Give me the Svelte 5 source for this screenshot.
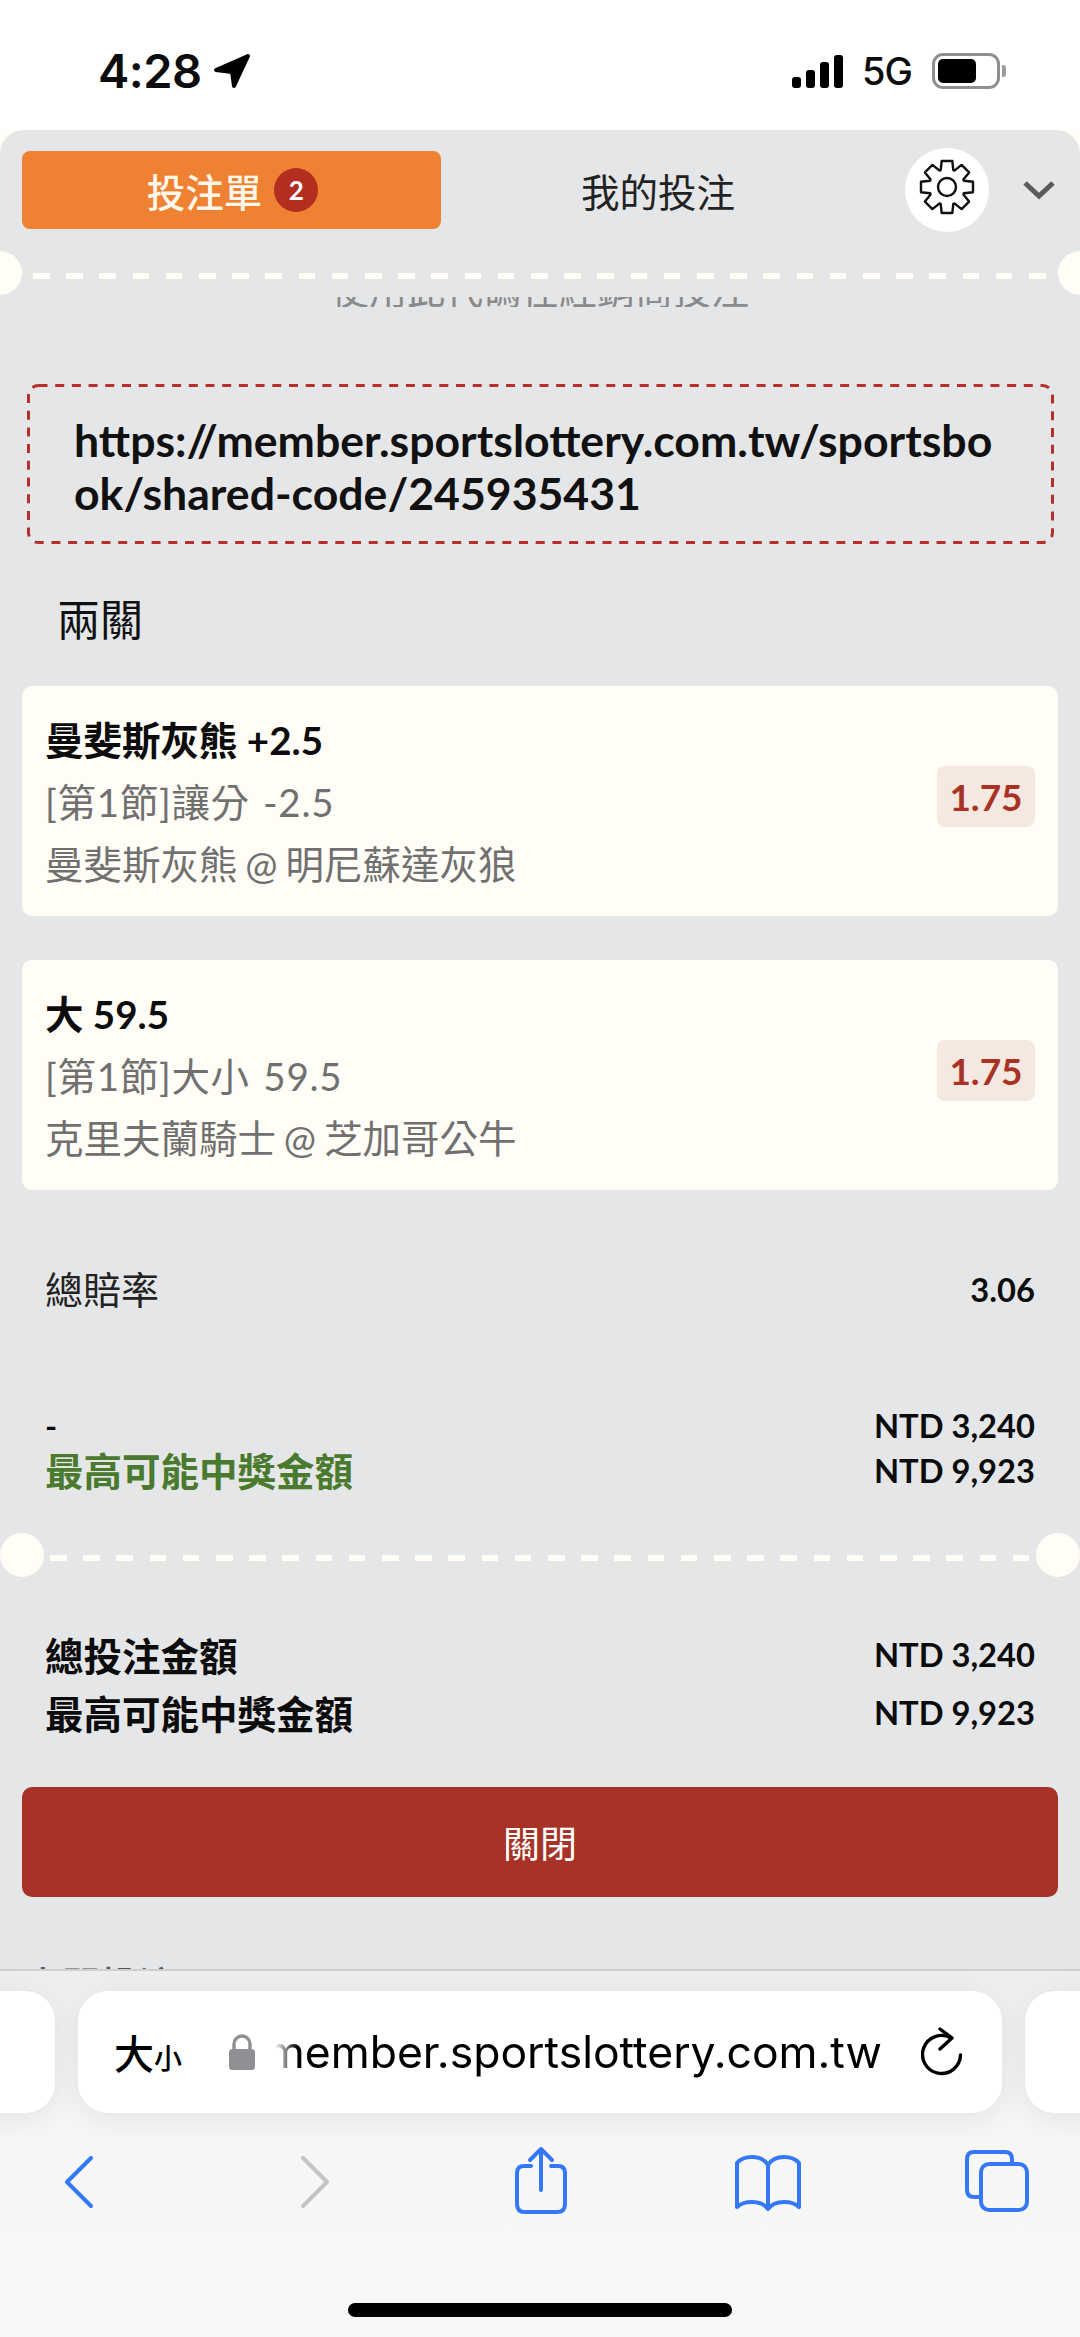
<script lang="ts">
  const bets = [
    { pick: '曼斐斯灰熊 +2.5', market: '[第1節]讓分 -2.5', game: '曼斐斯灰熊 @ 明尼蘇達灰狼', odds: '1.75' },
    { pick: '大 59.5', market: '[第1節]大小 59.5', game: '克里夫蘭騎士 @ 芝加哥公牛', odds: '1.75' }
  ];

  // 8-tooth gear outline, in a 56x56 box
  function gearPath(): string {
    const pts: string[] = [];
    const c = 28;
    for (let i = 0; i < 8; i++) {
      const a = (i * Math.PI) / 4 - Math.PI / 2;
      const step = [
        [-0.36, 18],
        [-0.2, 26.5],
        [0.2, 26.5],
        [0.36, 18]
      ];
      for (const [da, r] of step) {
        pts.push(`${(c + r * Math.cos(a + da)).toFixed(1)} ${(c + r * Math.sin(a + da)).toFixed(1)}`);
      }
    }
    return 'M' + pts.join('L') + 'Z';
  }
</script>

<div class="phone">
  <div class="status">
    <div class="status-left">
      <span class="time">4:28</span>
      <svg width="38" height="36" viewBox="0 0 38 36"><path d="M35 3 L3 17 L19 19 L21 33 Z" fill="#000" stroke="#000" stroke-width="4" stroke-linejoin="round" /></svg>
    </div>
    <div class="status-right">
      <div class="signal">
        <i style="height:11px"></i><i style="height:18px"></i><i style="height:26px"></i><i style="height:33px"></i>
      </div>
      <span class="net">5G</span>
      <div class="battery"><div class="battery-fill"></div></div>
      <div class="battery-nub"></div>
    </div>
  </div>

  <div class="sheet-wrap">
    <div class="sheet">
      <div class="head">
        <div class="tab active">投注單 <span class="count">2</span></div>
        <div class="tab">我的投注</div>
        <div class="gear">
          <svg width="58" height="58" viewBox="-1 -1 58 58" fill="none" stroke="#111" stroke-width="2.4" stroke-linejoin="round">
            <path d={gearPath()} />
            <circle cx="28" cy="28" r="9" />
          </svg>
        </div>
        <svg class="chev" width="34" height="20" viewBox="0 0 34 20"><path d="M3 3 L17 16 L31 3" fill="none" stroke="#5c5c5c" stroke-width="5" /></svg>
      </div>

      <div class="divider top"><span class="dot l"></span><span class="dot r"></span></div>
      <div class="clipped"><div>使用此代碼在經銷商投注</div></div>

      <div class="code">
        <svg class="code-border" width="1027" height="160"><rect x="1.5" y="1.5" width="1024" height="157" rx="10" fill="none" stroke="#b5302a" stroke-width="3" stroke-dasharray="9 7.7" /></svg>
        https://member.sportslottery.com.tw/sportsbook/shared-code/245935431
      </div>

      <div class="parlay">兩關</div>

      {#each bets as b}
        <div class="card">
          <div class="info">
            <div class="pick">{b.pick}</div>
            <div class="sub market">{b.market}</div>
            <div class="sub game">{b.game}</div>
          </div>
          <div class="odds">{b.odds}</div>
        </div>
      {/each}

      <div class="total-odds"><span>總賠率</span><b>3.06</b></div>

      <div class="line first"><b>-</b><b>NTD 3,240</b></div>
      <div class="line"><b class="green">最高可能中獎金額</b><b>NTD 9,923</b></div>

      <div class="divider bottom"><span class="dot l"></span><span class="dot r"></span></div>

      <div class="sum first"><b>總投注金額</b><b class="amt">NTD 3,240</b></div>
      <div class="sum"><b>最高可能中獎金額</b><b class="amt">NTD 9,923</b></div>

      <button class="close">關閉</button>
      <div class="peek">串關投注</div>
    </div>
  </div>

  <div class="toolbar">
    <div class="pills">
      <div class="pill side left"></div>
      <div class="pill main">
        <span class="aa">大<small>小</small></span>
        <svg class="lock" width="26" height="36" viewBox="0 0 26 36"><path d="M5 18 V10 a8 8 0 0 1 16 0 V18" fill="none" stroke="#8e8e93" stroke-width="3.4" /><rect x="0" y="15" width="26" height="21" rx="3.5" fill="#8e8e93" /></svg>
        <span class="addr"><span>member.sportslottery.com.tw</span></span>
        <svg class="reload" width="42" height="50" viewBox="0 0 42 50" fill="none" stroke="#000" stroke-width="3.4" stroke-linecap="round" stroke-linejoin="round"><path d="M30 11 A19 19 0 1 0 39.5 28" /><path d="M19 2 L31 11 L19 22" /></svg>
      </div>
      <div class="pill side right"></div>
    </div>
    <div class="icons">
      <svg width="30" height="52" viewBox="0 0 30 52" fill="none" stroke="#3478f6" stroke-width="4" stroke-linecap="round" stroke-linejoin="round"><path d="M27 2 L3 26 L27 50" /></svg>
      <svg width="30" height="52" viewBox="0 0 30 52" fill="none" stroke="#c4c4c6" stroke-width="4" stroke-linecap="round" stroke-linejoin="round"><path d="M3 2 L27 26 L3 50" /></svg>
      <svg width="52" height="68" viewBox="0 0 52 68" fill="none" stroke="#3478f6" stroke-width="4" stroke-linecap="round" stroke-linejoin="round"><path d="M16 20 H9 Q2 20 2 27 V58 Q2 66 10 66 H42 Q50 66 50 58 V27 Q50 20 43 20 H36" /><path d="M26 44 V3 M15 14 L26 3 L37 14" /></svg>
      <svg width="66" height="58" viewBox="0 0 66 58" fill="none" stroke="#3478f6" stroke-width="4" stroke-linecap="round" stroke-linejoin="round"><path d="M33 11 Q28 3 17 3 Q7 3 2 9 V53 Q7 48 17 48 Q28 48 33 55 Q38 48 49 48 Q59 48 64 53 V9 Q59 3 49 3 Q38 3 33 11 V55" /></svg>
      <svg width="64" height="62" viewBox="0 0 64 62" fill="none" stroke="#3478f6" stroke-width="4" stroke-linejoin="round"><path d="M47 14 V9 Q47 2 40 2 H9 Q2 2 2 9 V40 Q2 47 9 47 H16" /><rect x="16" y="14" width="46" height="46" rx="8" /></svg>
    </div>
    <div class="home"></div>
  </div>
</div>

<style>
  :global(body) {
    margin: 0;
    background: #fff;
  }

  .phone {
    width: 1080px;
    height: 2337px;
    display: flex;
    flex-direction: column;
    overflow: hidden;
    font-family: Lato, 'Noto Sans CJK TC', sans-serif;
    color: #0c0c0c;
  }

  .status {
    height: 130px;
    flex: none;
    display: flex;
    justify-content: space-between;
    align-items: flex-start;
    padding: 53px 74px 0 98px;
    box-sizing: border-box;
    background: #fff;
    font-family: Inter, sans-serif;
  }

  .status-left {
    display: flex;
    align-items: center;
    gap: 11px;
  }

  .time {
    font-size: 47px;
    line-height: 36px;
    font-weight: 600;
    letter-spacing: -0.5px;
  }

  .status-right {
    display: flex;
    align-items: center;
    height: 36px;
  }

  .signal {
    display: flex;
    align-items: flex-end;
    gap: 5px;
    margin-right: 19px;
  }

  .signal i {
    display: block;
    width: 9px;
    border-radius: 3px;
    background: #000;
  }

  .net {
    font-size: 38px;
    line-height: 36px;
    font-weight: 500;
    margin-right: 20px;
    letter-spacing: -1px;
  }

  .battery {
    width: 68px;
    height: 36px;
    box-sizing: border-box;
    border: 3px solid #8f8f8f;
    border-radius: 11px;
    padding: 3px;
  }

  .battery-fill {
    width: 38px;
    height: 100%;
    background: #000;
    border-radius: 5px;
  }

  .battery-nub {
    width: 4px;
    height: 12px;
    margin-left: 2px;
    background: #9a9a9a;
    border-radius: 0 3px 3px 0;
  }

  .sheet-wrap {
    height: 1839px;
    flex: none;
    background: #fffdf5;
  }

  .sheet {
    height: 100%;
    overflow: hidden;
    background: #e5e6e8;
    border-radius: 24px 24px 0 0;
    position: relative;
  }

  .head {
    display: flex;
    align-items: center;
    height: 78px;
    margin: 21px 0 0 22px;
  }

  .tab {
    width: 434px;
    height: 78px;
    display: flex;
    align-items: center;
    justify-content: center;
    font-size: 38.5px;
    color: #222;
  }

  .tab.active {
    width: 419px;
    box-sizing: border-box;
    padding-left: 2px;
    background: #ef8132;
    border-radius: 8px;
    color: #fff8ea;
    font-weight: 500;
    gap: 12px;
  }

  .count {
    width: 44px;
    height: 44px;
    border-radius: 50%;
    background: #b32d21;
    color: #fff;
    font-size: 26px;
    font-weight: 700;
    display: flex;
    align-items: center;
    justify-content: center;
  }

  .gear {
    width: 84px;
    height: 84px;
    flex: none;
    margin: 0 0 0 30px;
    border-radius: 50%;
    background: #fff;
    display: flex;
    align-items: center;
    justify-content: center;
  }

  .gear svg {
    margin-top: -6px;
  }

  .chev {
    margin-left: 33px;
  }

  .divider {
    position: relative;
    height: 5px;
    background: repeating-linear-gradient(90deg, #fffdf5 0 16.6px, transparent 16.6px 33.2px);
  }

  .divider.top {
    margin: 44px 33px 0;
    height: 6px;
  }

  .divider.bottom {
    margin: 62px 49px 0 50px;
    height: 6px;
  }

  .dot {
    position: absolute;
    top: -22px;
    width: 44px;
    height: 44px;
    border-radius: 50%;
    background: #fffdf5;
  }

  .top .dot.l {
    left: -55px;
  }

  .top .dot.r {
    right: -55px;
  }

  .bottom .dot.l {
    left: -50px;
  }

  .bottom .dot.r {
    right: -49px;
  }

  .clipped {
    height: 10px;
    margin-top: 18px;
    overflow: hidden;
    text-align: center;
    font-size: 38px;
    line-height: 38px;
    color: #8a8a8a;
  }

  .clipped div {
    margin-top: -27px;
  }

  .code {
    position: relative;
    margin: 77px 26px 0 27px;
    height: 160px;
    box-sizing: border-box;
    padding: 29px 50px 0 47px;
    font-size: 44.6px;
    line-height: 53px;
    font-weight: 700;
    word-break: break-all;
    color: #111;
  }

  .code-border {
    position: absolute;
    left: 0;
    top: 0;
  }

  .parlay {
    margin: 46px 0 36px 57px;
    font-size: 43px;
    line-height: 60px;
    color: #111;
  }

  .card {
    margin: 0 22px 44px;
    height: 230px;
    box-sizing: border-box;
    padding: 23px 23px 0;
    background: #fffdf6;
    border-radius: 10px;
    display: flex;
    justify-content: space-between;
  }

  .pick {
    font-size: 38.5px;
    line-height: 62px;
    font-weight: 700;
    color: #0c0c0c;
  }

  .sub {
    font-size: 38.5px;
    line-height: 62px;
    color: #707070;
  }

  .market {
    letter-spacing: 0.7px;
    word-spacing: 3px;
  }

  .game {
    word-spacing: -2px;
  }

  .odds {
    align-self: center;
    margin: -32px 0 0;
    width: 98px;
    height: 61px;
    background: #f5e8e1;
    border-radius: 8px;
    display: flex;
    align-items: center;
    justify-content: center;
    color: #a83325;
    font-size: 37px;
    font-weight: 700;
  }

  .total-odds {
    margin: 74px 45px 0;
    height: 50px;
    display: flex;
    align-items: center;
    justify-content: space-between;
    font-size: 38px;
    color: #222;
  }

  .total-odds span {
    margin-top: -4px;
  }

  .total-odds b {
    font-size: 32.7px;
    color: #0c0c0c;
  }

  .line {
    margin: 0 45px;
    height: 45px;
    display: flex;
    align-items: center;
    justify-content: space-between;
    font-size: 32.7px;
  }

  .line.first {
    margin-top: 89px;
  }

  .green {
    color: #4a7a2e;
    font-size: 38.5px;
    margin-top: -3px;
  }

  .sum {
    margin: 0 45px;
    height: 58px;
    display: flex;
    align-items: center;
    justify-content: space-between;
    font-size: 38.5px;
  }

  .sum.first {
    margin-top: 64px;
  }

  .amt {
    font-size: 32.7px;
  }

  .close {
    display: block;
    width: 1036px;
    height: 110px;
    margin: 46px 22px 0;
    border: none;
    border-radius: 10px;
    background: #a63325;
    color: #fff;
    font-family: inherit;
    font-size: 37px;
  }

  .peek {
    margin: 68px 0 0 24px;
    font-size: 38px;
    line-height: 38px;
    font-weight: 500;
    color: #555;
  }

  .toolbar {
    flex: 1;
    position: relative;
    border-top: 2px solid #cfcfd1;
    box-sizing: border-box;
    background: linear-gradient(#eeeeef, #f6f6f6 40%, #f8f8f7);
  }

  .pills {
    display: flex;
    gap: 23px;
    margin: 20px 0 0 -200px;
    width: 1500px;
  }

  .pill {
    height: 122px;
    background: #fff;
    border-radius: 30px;
    flex: none;
    box-shadow: 0 6px 30px rgba(0, 0, 0, 0.08);
  }

  .pill.side {
    width: 255px;
  }

  .pill.main {
    width: 924px;
    box-sizing: border-box;
    padding: 0 40px 0 36px;
    display: flex;
    align-items: center;
  }

  .aa {
    font-size: 40px;
    font-family: 'Noto Sans CJK TC', sans-serif;
    font-weight: 500;
    width: 115px;
    flex: none;
    color: #000;
  }

  .aa small {
    font-size: 28px;
  }

  .lock {
    flex: none;
  }

  .addr {
    width: 607px;
    margin-left: 20px;
    flex: none;
    overflow: hidden;
    white-space: nowrap;
    display: flex;
    justify-content: flex-end;
    font-family: Inter, sans-serif;
    font-size: 44.5px;
    color: #000;
    -webkit-mask-image: linear-gradient(90deg, transparent 0, #000 22px);
    mask-image: linear-gradient(90deg, transparent 0, #000 22px);
  }

  .reload {
    margin-left: 39px;
    flex: none;
  }

  .icons {
    position: relative;
    height: 70px;
    margin-top: 33px;
  }

  .icons svg {
    position: absolute;
  }

  .icons svg:nth-child(1) { left: 64px; top: 10px; }
  .icons svg:nth-child(2) { left: 300px; top: 10px; }
  .icons svg:nth-child(3) { left: 515px; top: 0; }
  .icons svg:nth-child(4) { left: 735px; top: 8px; }
  .icons svg:nth-child(5) { left: 965px; top: 4px; }

  .home {
    position: absolute;
    left: 348px;
    top: 332px;
    width: 384px;
    height: 14px;
    border-radius: 7px;
    background: #000;
  }
</style>
